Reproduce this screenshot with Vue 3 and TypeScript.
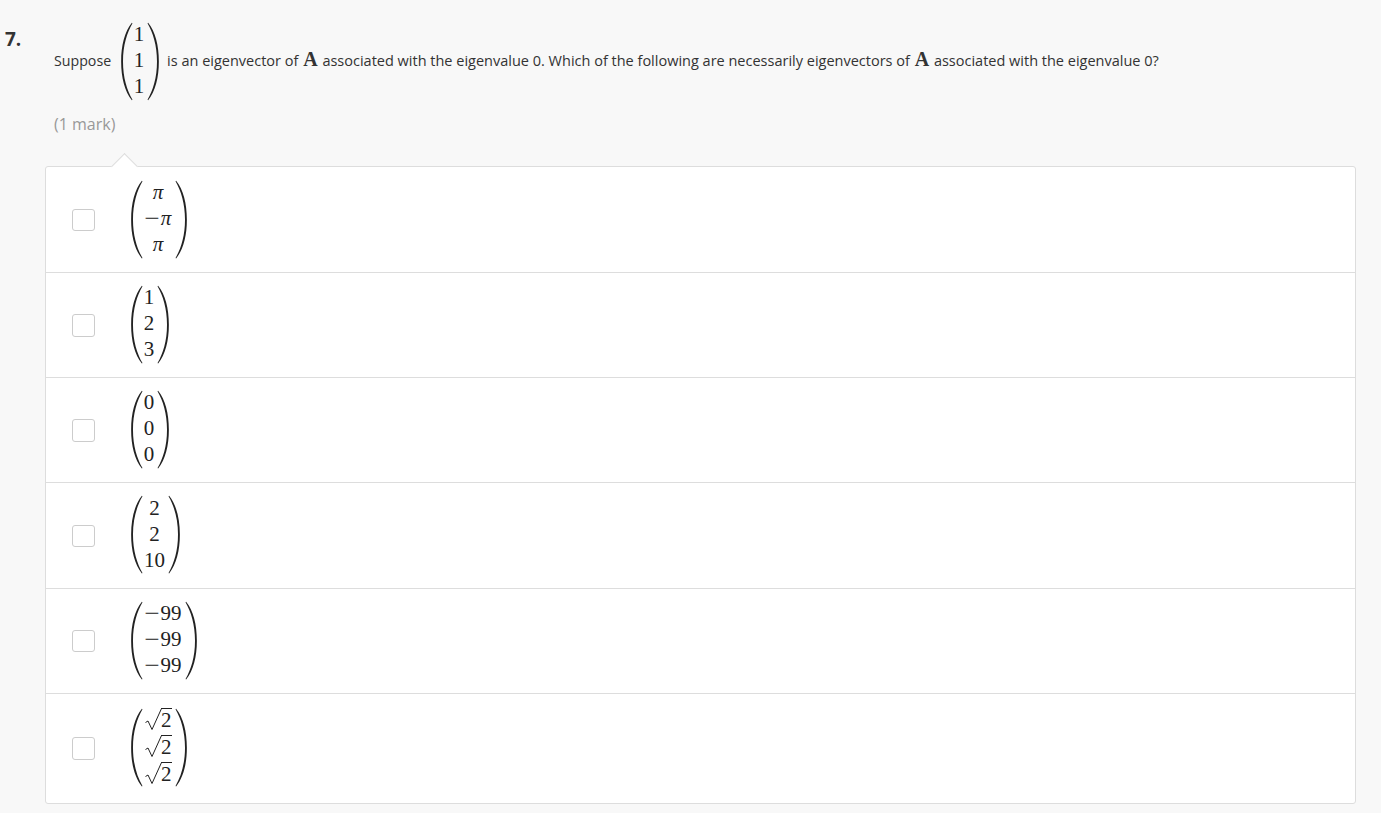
<script setup lang="ts">
type Cell = { kind: 'num' | 'pi' | 'neg-pi' | 'neg' | 'sqrt'; text?: string };
const n = (t: string): Cell => ({ kind: 'num', text: t });
const neg99: Cell = { kind: 'neg', text: '99' };
const options: { cells: Cell[]; width: number; tall?: boolean }[] = [
  { cells: [{ kind: 'pi' }, { kind: 'neg-pi' }, { kind: 'pi' }], width: 30 },
  { cells: [n('1'), n('2'), n('3')], width: 12 },
  { cells: [n('0'), n('0'), n('0')], width: 12 },
  { cells: [n('2'), n('2'), n('10')], width: 23 },
  { cells: [neg99, neg99, neg99], width: 40 },
  { cells: [{ kind: 'sqrt' }, { kind: 'sqrt' }, { kind: 'sqrt' }], width: 30, tall: true },
];
const question: Cell[] = [n('1'), n('1'), n('1')];
const parenPath = 'M11.6 0.3 C6 10 1.9 23 1.9 39.5 C1.9 56 6 69 11.6 78.7 L11 79.2 C3.6 70 0 56 0 39.5 C0 23 3.6 9 11 -0.2 Z';
</script>

<template>
  <main class="page">
    <header class="question">
      <div class="number">7.</div>
      <div class="prompt">
        <span class="line short">Suppose</span>
        <span class="matrix first">
          <svg class="paren" viewBox="0 -1 12 81" aria-hidden="true"><path :d="parenPath" /></svg>
          <span class="cells narrow">
            <span v-for="(c, i) in question" :key="i" class="cell">{{ c.text }}</span>
          </span>
          <svg class="paren flip" viewBox="0 -1 12 81" aria-hidden="true"><path :d="parenPath" /></svg>
        </span>
        <span class="line long">is an eigenvector of <b class="bold-math">A</b> associated with the eigenvalue 0. Which of the following are necessarily eigenvectors of <b class="bold-math">A</b> associated with the eigenvalue 0?</span>
      </div>
    </header>
    <p class="mark">(1 mark)</p>
    <section class="card">
      <span class="notch"></span>
      <div v-for="(opt, i) in options" :key="i" class="row" :class="{ tall: opt.tall }">
        <span class="checkbox"></span>
        <span class="matrix">
          <svg class="paren" viewBox="0 -1 12 81" aria-hidden="true"><path :d="parenPath" /></svg>
          <span class="cells" :style="{ width: opt.width + 'px' }">
            <span v-for="(c, j) in opt.cells" :key="j" class="cell" :class="{ 'sqrt-cell': c.kind === 'sqrt' }">
              <template v-if="c.kind === 'num'">{{ c.text }}</template>
              <i v-else-if="c.kind === 'pi'">π</i>
              <template v-else-if="c.kind === 'neg-pi'"><span class="minus">−</span><i>π</i></template>
              <template v-else-if="c.kind === 'neg'"><span class="minus">−</span>{{ c.text }}</template>
              <span v-else class="sqrt">
                <svg class="radical" viewBox="0 0 17 24" aria-hidden="true"><path d="M0.5 14.5 L3 13 L7 21.5 L16.5 0.5 H17" /></svg><span class="radicand">2</span>
              </span>
            </span>
          </span>
          <svg class="paren flip" viewBox="0 -1 12 81" aria-hidden="true"><path :d="parenPath" /></svg>
        </span>
      </div>
    </section>
  </main>
</template>

<style>
html, body { background: #f8f8f8; }
</style>

<style scoped>
.page {
  min-height: 813px;
  box-sizing: border-box;
  padding-top: 22px;
  background: #f8f8f8;
  font-family: "Open Sans", sans-serif;
  color: #333;
  overflow: hidden;
}
.question {
  display: flex;
  align-items: flex-start;
}
.number {
  width: 54px;
  box-sizing: border-box;
  padding: 5px 0 0 5px;
  font-size: 19px;
  line-height: 24px;
  font-weight: 700;
}
.prompt {
  display: flex;
  align-items: center;
  font-size: 14.5px;
  line-height: 20px;
  white-space: nowrap;
}
.line {
  padding-bottom: 2px;
}
.line.short {
  font-size: 14.2px;
  margin-right: 10px;
}
.line.long {
  padding-bottom: 4px;
  margin-left: 8px;
}
.bold-math {
  font-family: "Liberation Serif", serif;
  font-size: 20px;
  font-weight: 700;
  line-height: 1;
  margin: 0 1px;
}
.mark {
  margin: 12px 0 0 54px;
  font-size: 16px;
  line-height: 22px;
  color: #999;
}
.card {
  position: relative;
  margin: 31px 25px 0 45px;
  background: #fff;
  border: 1px solid #ddd;
  border-radius: 3px;
}
.notch {
  position: absolute;
  left: 69px;
  top: -10px;
  width: 18px;
  height: 18px;
  background: #fff;
  border: 1px solid #ddd;
  border-right: 0;
  border-bottom: 0;
  transform: rotate(45deg);
}
.row {
  position: relative;
  display: flex;
  align-items: center;
  padding: 12px 0 13px 26px;
  border-bottom: 1px solid #ddd;
}
.notch + .row {
  padding-top: 12.65px;
}
.row:last-child {
  border-bottom: 0;
}
.row.tall {
  padding-top: 14px;
  padding-bottom: 16px;
}
.checkbox {
  box-sizing: border-box;
  width: 22.5px;
  height: 22.5px;
  border: 1px solid #ccc;
  border-radius: 3px;
  background: #fff;
  margin: 1.8px 36.5px 0 0;
}
.matrix {
  display: inline-flex;
  align-items: stretch;
  height: 79.25px;
  color: #222;
  font-family: "Liberation Serif", serif;
}
.matrix.first {
  height: 79px;
}
.paren {
  width: 12px;
  height: 100%;
  flex: none;
}
.paren path {
  fill: #222;
}
.flip {
  transform: scaleX(-1);
}
.cells {
  display: flex;
  flex-direction: column;
  justify-content: center;
  align-items: center;
  margin: 0 2px 0 0;
  padding-bottom: 3px;
  box-sizing: content-box;
}
.cells.narrow {
  width: 12px;
}
.cell {
  display: block;
  height: 26px;
  font-size: 21px;
  line-height: 26px;
  white-space: nowrap;
  text-align: center;
}
.minus {
  display: inline-block;
  transform: scaleX(1.3);
  margin: 0 3px 0 1px;
}
.cell.sqrt-cell {
  height: 27px;
}
.sqrt {
  display: inline-flex;
  align-items: flex-start;
  margin-top: 2px;
}
.radical {
  width: 17px;
  height: 24px;
  flex: none;
}
.radical path {
  fill: none;
  stroke: #222;
  stroke-width: 1;
}
.radicand {
  border-top: 1px solid #222;
  margin-left: -0.5px;
  line-height: 23px;
  height: 23px;
}
</style>
